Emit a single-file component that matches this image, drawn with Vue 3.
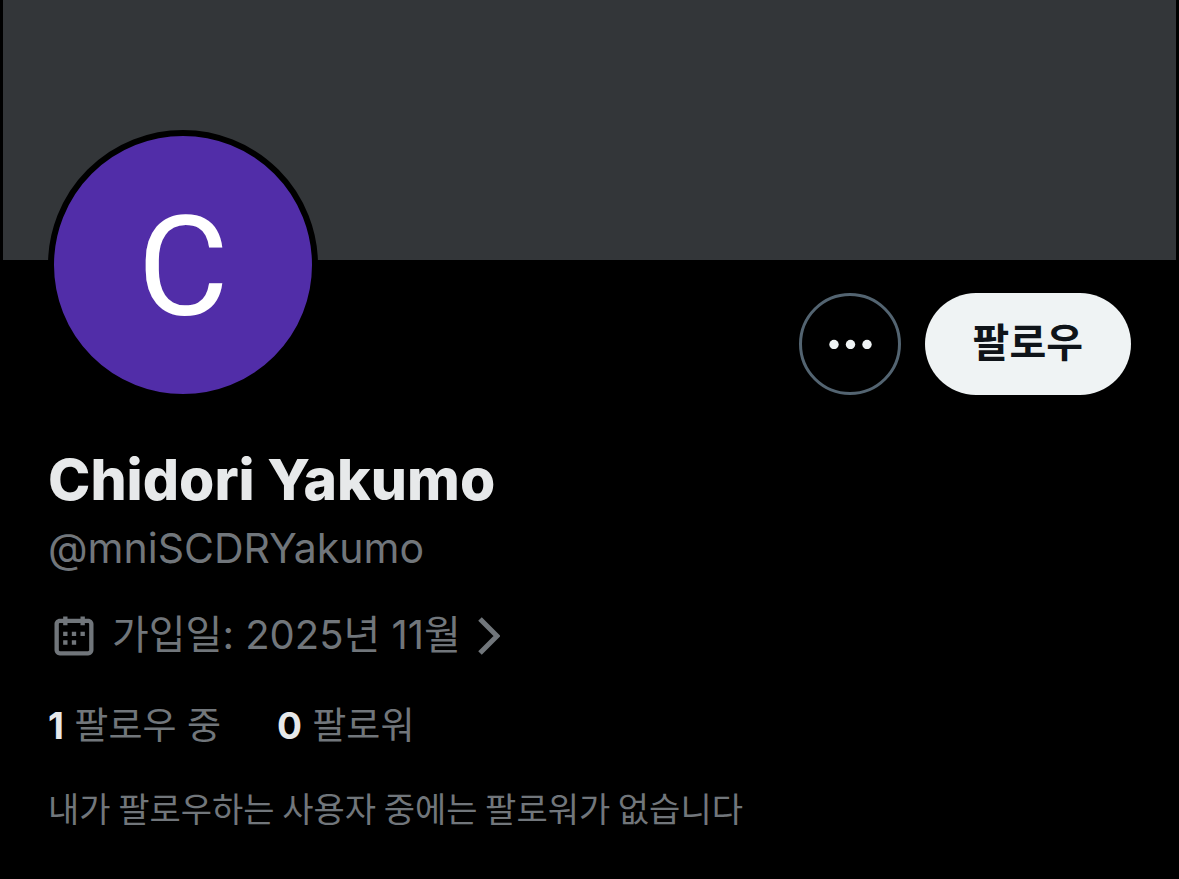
<script setup>
const name = 'Chidori Yakumo'
const handle = '@mniSCDRYakumo'
const stats = [
  { label: '팔로우 중', count: 1 },
  { label: '팔로워', count: 0 }
]
</script>

<template>
  <main class="profile">
    <div class="banner"></div>
    <div class="content">
      <div class="top">
        <a class="avatar" href="#" :aria-label="name">
          <span>{{ name[0] }}</span>
        </a>
        <div class="actions">
          <button class="more" type="button" aria-label="더 보기">
            <svg viewBox="0 0 44 10" aria-hidden="true">
              <circle cx="6" cy="5.500" r="4.700" />
              <circle cx="22.500" cy="5.500" r="4.700" />
              <circle cx="39" cy="5.500" r="4.700" />
            </svg>
          </button>
          <button class="follow" type="button">팔로우</button>
        </div>
      </div>
      <h1>{{ name }}</h1>
      <p class="handle">{{ handle }}</p>
      <a class="joined" href="#">
        <svg class="calendar" viewBox="0 0 24 24" aria-hidden="true">
          <path
            d="M7 4V3h2v1h6V3h2v1h1.500C19.890 4 21 5.120 21 6.500v12c0 1.380-1.110 2.500-2.500 2.500h-13C4.120 21 3 19.880 3 18.500v-12C3 5.120 4.120 4 5.500 4H7zm0 2H5.500c-.270 0-.5.220-.5.500v12c0 .280.230.500.500.500h13c.280 0 .500-.220.500-.500v-12c0-.280-.220-.500-.500-.500H17v1h-2V6H9v1H7V6zm0 6h2v-2H7v2zm0 4h2v-2H7v2zm4-4h2v-2h-2v2zm0 4h2v-2h-2v2zm4-4h2v-2h-2v2z"
          />
        </svg>
        <span>가입일: 2025년 11월</span>
        <svg class="chevron" viewBox="0 0 22 38" aria-hidden="true">
          <path d="M2 2L19 19L2 36" />
        </svg>
      </a>
      <nav class="stats">
        <a v-for="item in stats" :key="item.label" href="#"
          ><strong>{{ item.count }}</strong> {{ item.label }}</a
        >
      </nav>
      <p class="note">내가 팔로우하는 사용자 중에는 팔로워가 없습니다</p>
    </div>
  </main>
</template>

<style>
body {
  margin: 0;
  background: #000;
}
</style>

<style scoped>
.profile {
  color: #71767b;
  font-family: Inter, 'Noto Sans CJK KR', sans-serif;
}
.banner {
  height: 260px;
  margin: 0 3px;
  background: #333639;
}
.content {
  padding: 0 48px;
}
.top {
  display: flex;
  justify-content: space-between;
  align-items: flex-end;
  margin-top: -130px;
}
.avatar {
  display: flex;
  align-items: center;
  justify-content: center;
  box-sizing: border-box;
  width: 270px;
  height: 270px;
  padding-top: 4px;
  border: 6px solid #000;
  border-radius: 50%;
  background: #512da8;
  color: #fff;
  font-family: Roboto, sans-serif;
  font-size: 140px;
  line-height: 160px;
}
.actions {
  display: flex;
  gap: 24px;
  padding-bottom: 5px;
}
button {
  box-sizing: border-box;
  height: 102px;
  border-radius: 51px;
  font-family: inherit;
}
.more {
  display: flex;
  align-items: center;
  justify-content: center;
  width: 102px;
  padding: 0;
  border: 3px solid #536471;
  background: transparent;
}
.more svg {
  width: 44px;
  fill: #eff3f4;
}
.follow {
  padding: 0 48px 8px;
  border: 0;
  background: #eff3f4;
  color: #0f1419;
  font-size: 40px;
  font-weight: 700;
}
h1 {
  margin: 48px 0 0;
  color: #e7e9ea;
  font-size: 57px;
  font-weight: 800;
  line-height: 64px;
}
p {
  margin: 0;
}
.handle {
  font-size: 41px;
  line-height: 72px;
}
a {
  color: inherit;
  text-decoration: none;
}
.joined {
  display: flex;
  align-items: center;
  height: 56px;
  margin-top: 24px;
  font-size: 40px;
}
.joined span {
  padding-bottom: 8px;
}
.calendar {
  width: 52px;
  height: 52px;
  margin-right: 12px;
  fill: currentColor;
}
.chevron {
  width: 22px;
  height: 38px;
  margin-left: 17px;
  fill: none;
  stroke: currentColor;
  stroke-width: 5px;
}
.stats {
  display: flex;
  gap: 56px;
  margin-top: 34px;
  font-size: 37px;
  line-height: 56px;
}
.stats strong {
  color: #e7e9ea;
}
.note {
  margin-top: 28px;
  font-family: 'Noto Sans CJK KR', sans-serif;
  font-size: 34px;
  line-height: 52px;
}
</style>
